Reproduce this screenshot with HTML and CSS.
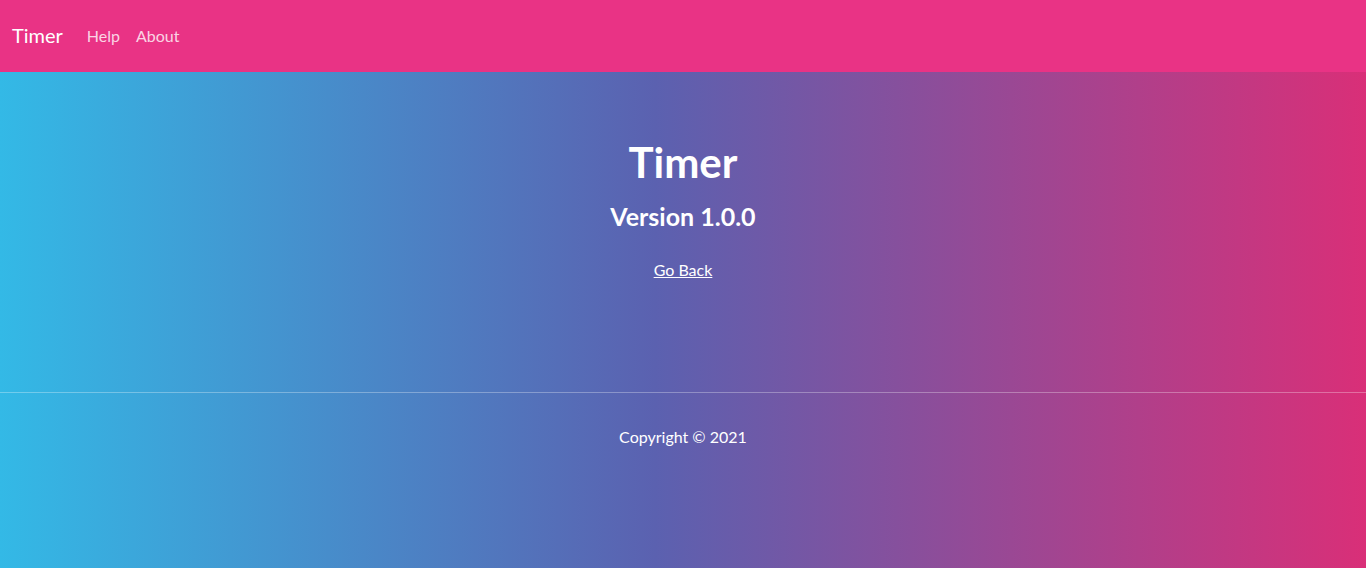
FILE: index.html
```html
<!DOCTYPE html>
<html lang="en">
<head>
<meta charset="utf-8">
<title>Timer - About</title>
<link rel="stylesheet" href="styles.css">
</head>
<body>
<nav class="navbar">
  <a class="brand" href="#">Timer</a>
  <a class="nav-link" href="#">Help</a>
  <a class="nav-link" href="#">About</a>
</nav>
<div class="page">
  <main class="content">
    <h1 class="title">Timer</h1>
    <h3 class="version">Version 1.0.0</h3>
    <a class="back" href="#">Go Back</a>
  </main>
  <hr class="divider">
  <footer class="footer">Copyright © 2021</footer>
</div>
</body>
</html>
```
FILE: styles.css
```css
* { box-sizing: border-box; }
html, body { margin: 0; padding: 0; height: 100%; }
body {
  font-family: "Lato", "Open Sans", sans-serif;
  font-size: 16px;
  color: #fff;
  display: flex;
  flex-direction: column;
}
.navbar {
  height: 72px;
  background: #e93385;
  display: flex;
  align-items: center;
  padding: 0 12px 2px;
}
.brand {
  color: #fff;
  font-size: 20px;
  text-decoration: none;
  margin-right: 16px;
}
.nav-link {
  color: rgba(255,255,255,0.8);
  text-decoration: none;
  padding: 0 8px;
}
.page {
  flex: 1;
  background: linear-gradient(to right, #33b9e6 0%, #5b61b0 48%, #d92f78 100%);
  display: flex;
  flex-direction: column;
}
.content {
  display: flex;
  flex-direction: column;
  align-items: center;
  padding-top: 66px;
  height: 320px;
}
.title {
  margin: 0;
  font-size: 42px;
  font-weight: 700;
  line-height: 48px;
}
.version {
  margin: 16px 0 0;
  font-size: 25px;
  font-weight: 700;
  line-height: 29px;
}
.back {
  margin-top: 27px;
  color: #fff;
  line-height: 24px;
}
.divider {
  margin: 0;
  border: 0;
  border-top: 1px solid rgba(255,255,255,0.3);
}
.footer {
  text-align: center;
  padding-top: 32px;
  line-height: 24px;
}
```
